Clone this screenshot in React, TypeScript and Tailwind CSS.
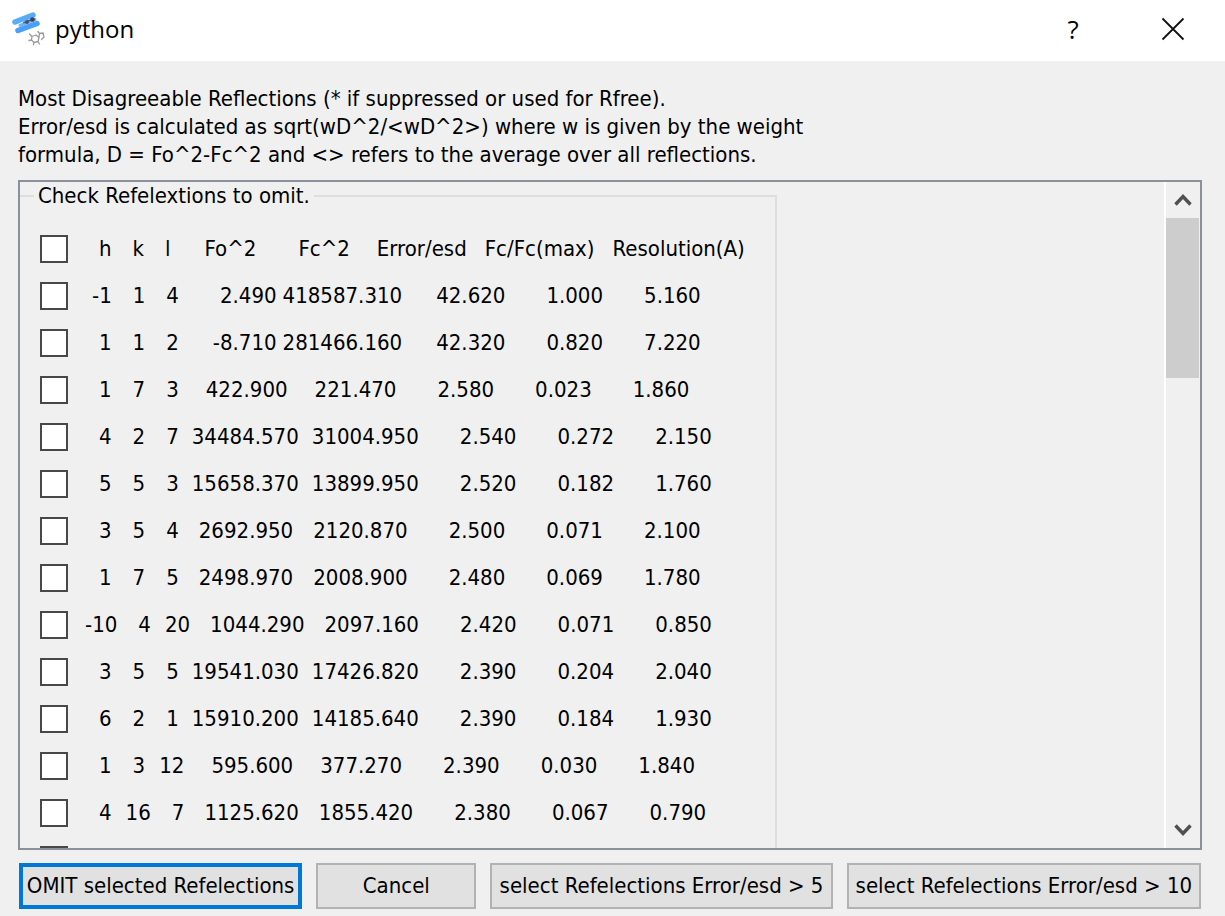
import { useState } from 'react';

type Row = { hkl: [number, number, number]; values: number[] };
type Cell = [text: string, gap: number];

const HEADER: Cell[] = [
  ['h', 21],
  ['k', 21],
  ['l', 21],
  ['Fo^2', 34],
  ['Fc^2', 42],
  ['Error/esd', 27],
  ['Fc/Fc(max)', 18],
  ['Resolution(A)', 18],
];

const ROWS: Row[] = [
  { hkl: [-1, 1, 4], values: [2.49, 418587.31, 42.62, 1.0, 5.16] },
  { hkl: [1, 1, 2], values: [-8.71, 281466.16, 42.32, 0.82, 7.22] },
  { hkl: [1, 7, 3], values: [422.9, 221.47, 2.58, 0.023, 1.86] },
  { hkl: [4, 2, 7], values: [34484.57, 31004.95, 2.54, 0.272, 2.15] },
  { hkl: [5, 5, 3], values: [15658.37, 13899.95, 2.52, 0.182, 1.76] },
  { hkl: [3, 5, 4], values: [2692.95, 2120.87, 2.5, 0.071, 2.1] },
  { hkl: [1, 7, 5], values: [2498.97, 2008.9, 2.48, 0.069, 1.78] },
  { hkl: [-10, 4, 20], values: [1044.29, 2097.16, 2.42, 0.071, 0.85] },
  { hkl: [3, 5, 5], values: [19541.03, 17426.82, 2.39, 0.204, 2.04] },
  { hkl: [6, 2, 1], values: [15910.2, 14185.64, 2.39, 0.184, 1.93] },
  { hkl: [1, 3, 12], values: [595.6, 377.27, 2.39, 0.03, 1.84] },
  { hkl: [4, 16, 7], values: [1125.62, 1855.42, 2.38, 0.067, 0.79] },
];

const SPACE = 7;

// Fixed-width fields (4 for indices, 11 for values), padded on the left
function fields(row: Row): Cell[] {
  return [
    ...row.hkl.map((n): Cell => [String(n), (4 - String(n).length) * SPACE]),
    ...row.values.map((n): Cell => [n.toFixed(3), (11 - n.toFixed(3).length) * SPACE - 1]),
  ];
}

interface CheckRowProps {
  cells: Cell[];
  checked: boolean;
  onChange: () => void;
  label?: string;
}

function CheckRow({ cells, checked, onChange, label }: CheckRowProps) {
  return (
    <label className="flex items-center h-[47px] whitespace-pre">
      <input
        type="checkbox"
        aria-label={label}
        checked={checked}
        onChange={onChange}
        className="appearance-none shrink-0 w-7 h-7 mr-2.5 bg-white border-2 border-[#484848] checked:bg-[#0078d7]"
      />
      {cells.map(([text, gap], i) => (
        <span key={i} style={{ paddingLeft: gap }}>
          {text}
        </span>
      ))}
    </label>
  );
}

function AppIcon() {
  return (
    <svg viewBox="0 0 36 36" className="w-9 h-9" fill="none" strokeLinecap="round" strokeLinejoin="round">
      <path d="M4 11 L22 4" stroke="#5aaafa" strokeWidth="5.5" />
      <path d="M7 19.5 L26 12.5" stroke="#4a9ff8" strokeWidth="5.5" />
      <path d="M9 14.5 L24 8.5" stroke="#6db2f7" strokeWidth="3" />
      <path d="M13 11.5 L21 8.5" stroke="#4a5d78" strokeWidth="1.8" />
      <circle cx="16" cy="11" r="1.9" fill="#46546a" />
      <circle cx="21.5" cy="8.5" r="2.3" fill="#3a4350" />
      <path
        d="M21 25.5 L25 24 L28 26.5 L27 30.5 L23 31.5 L20.5 29 Z M28 26.5 L28.5 22.5 L32 22 L33 26 L30.5 28.5 M21 25.5 L18.5 23 M20.5 29 L18 29.5 M23 31.5 L22.5 33.5 M27 30.5 L28.5 33 M28.5 22.5 L27 20.5"
        stroke="#9a9a9a"
        strokeWidth="1.3"
      />
    </svg>
  );
}

export default function App() {
  const [selected, setSelected] = useState<number[]>([]);

  const toggle = (i: number) =>
    setSelected((s) => (s.includes(i) ? s.filter((n) => n !== i) : [...s, i]));

  const selectAbove = (limit: number) =>
    setSelected(ROWS.map((_, i) => i).filter((i) => ROWS[i].values[2] > limit));

  const all = selected.length === ROWS.length;
  const button = 'h-[46px] min-w-0 whitespace-nowrap bg-[#e1e1e1] text-center';

  return (
    <div className="h-screen flex flex-col bg-[#f0f0f0] text-black text-[22px] leading-7 font-['DejaVu_Sans_Condensed','DejaVu_Sans',sans-serif]">
      {/* Title bar */}
      <header className="h-[61px] shrink-0 flex items-center bg-white pl-[11px] pr-10 pb-1 font-['Open_Sans',sans-serif]">
        <AppIcon />
        <h1 className="ml-2 flex-1 text-2xl">python</h1>
        <button aria-label="Help" className="w-8 mr-[72px] text-[26px]">
          ?
        </button>
        <button aria-label="Close">
          <svg viewBox="0 0 24 24" className="w-6 h-6" stroke="#111" strokeWidth="1.8">
            <path d="M1.5 1.5 L22.5 22.5 M22.5 1.5 L1.5 22.5" />
          </svg>
        </button>
      </header>

      <main className="flex-1 min-h-0 flex flex-col pt-6 pb-[7px] pl-[18px] pr-[23px]">
        <p className="shrink-0">
          Most Disagreeable Reflections (* if suppressed or used for Rfree).
          <br />
          Error/esd is calculated as sqrt(wD^2/&lt;wD^2&gt;) where w is given by the weight
          <br />
          formula, D = Fo^2-Fc^2 and &lt;&gt; refers to the average over all reflections.
        </p>

        {/* Reflection list */}
        <div className="mt-[11px] flex-1 min-h-0 flex border-2 border-[#8a919b]">
          <div className="flex-1 overflow-y-auto [scrollbar-width:none]">
            <fieldset className="w-[757px] border-2 border-l-0 border-[#dedede] pl-5">
              <legend className="-ml-1.5 px-1">Check Refelextions to omit.</legend>
              <div className="pt-[15px]">
                <CheckRow
                  cells={HEADER}
                  checked={all}
                  onChange={() => setSelected(all ? [] : ROWS.map((_, i) => i))}
                />
                {ROWS.map((row, i) => (
                  <CheckRow
                    key={i}
                    cells={fields(row)}
                    checked={selected.includes(i)}
                    onChange={() => toggle(i)}
                  />
                ))}
                <CheckRow cells={[]} label="Next reflection" checked={false} onChange={() => {}} />
              </div>
            </fieldset>
          </div>

          {/* Scrollbar */}
          <div className="w-9 shrink-0 flex flex-col border-l-2 border-r border-l-white border-r-[#f0f0f0]">
            <button aria-label="Scroll up" className="h-9 shrink-0 flex items-center justify-center">
              <svg viewBox="0 0 18 14" className="w-[18px] h-[14px]" fill="none" stroke="#505050" strokeWidth="3.4">
                <path d="M1.5 11.5 L9 3.5 L16.5 11.5" />
              </svg>
            </button>
            <div className="flex-1">
              <div className="h-[27%] bg-[#cdcdcd]" />
            </div>
            <button aria-label="Scroll down" className="h-9 shrink-0 flex items-center justify-center">
              <svg viewBox="0 0 18 14" className="w-[18px] h-[14px]" fill="none" stroke="#505050" strokeWidth="3.4">
                <path d="M1.5 2.5 L9 10.5 L16.5 2.5" />
              </svg>
            </button>
          </div>
        </div>

        {/* Actions */}
        <div className="mt-[13px] px-px shrink-0 grid grid-cols-[283fr_160fr_342fr_354fr] gap-3.5">
          <button className={`${button} border-4 border-[#0078d7]`}>
            OMIT selected Refelections
          </button>
          <button className={`${button} border-2 border-[#b2b2b2]`}>Cancel</button>
          <button
            className={`${button} border-2 border-[#b2b2b2]`}
            onClick={() => selectAbove(5)}
          >
            select Refelections Error/esd &gt; 5
          </button>
          <button
            className={`${button} border-2 border-[#b2b2b2]`}
            onClick={() => selectAbove(10)}
          >
            select Refelections Error/esd &gt; 10
          </button>
        </div>
      </main>
    </div>
  );
}
